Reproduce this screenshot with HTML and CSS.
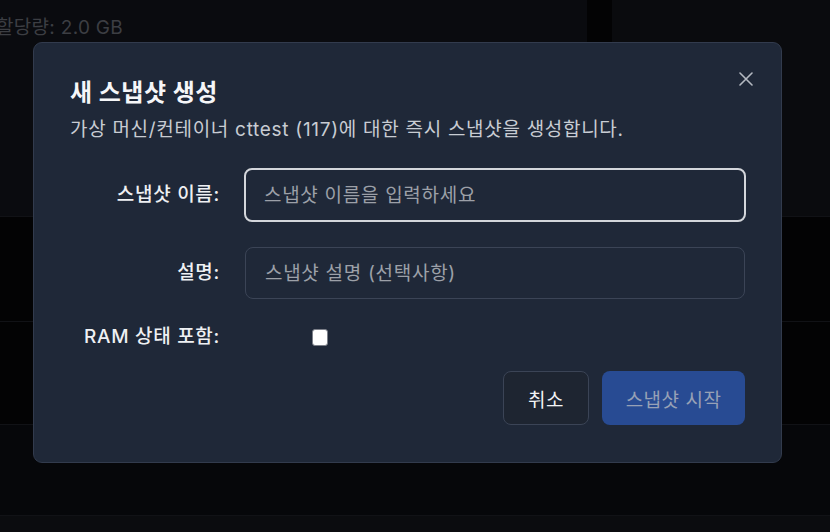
FILE: index.html
```html
<!DOCTYPE html>
<html lang="ko">
<head>
<meta charset="utf-8">
<title>새 스냅샷 생성</title>
<link rel="stylesheet" href="styles.css">
</head>
<body>
<div class="page">
  <div class="top">
    <div class="panel-left"><p class="quota">할당량: 2.0 GB</p></div>
    <div class="divider"></div>
    <div class="panel-right"></div>
  </div>
  <div class="rows">
    <div class="row row-a"></div>
    <div class="row row-b"></div>
    <div class="row row-c"></div>
    <div class="row row-d"></div>
  </div>
</div>

<div class="dialog" role="dialog">
  <button class="close" aria-label="닫기">
    <svg width="14" height="14" viewBox="0 0 14 14"><path d="M1 1L13 13M13 1L1 13" stroke="#b4b9c1" stroke-width="1.6" stroke-linecap="round"/></svg>
  </button>
  <h2 class="title">새 스냅샷 생성</h2>
  <p class="desc">가상 머신/컨테이너 cttest (117)에 대한 즉시 스냅샷을 생성합니다.</p>
  <div class="form">
    <label class="label">스냅샷 이름:</label>
    <input class="input focused" type="text" placeholder="스냅샷 이름을 입력하세요">
    <label class="label">설명:</label>
    <input class="input" type="text" placeholder="스냅샷 설명 (선택사항)">
    <label class="label label-check">RAM 상태 포함:</label>
    <div class="check-cell"><span class="checkbox"></span></div>
  </div>
  <div class="actions">
    <button class="btn btn-outline">취소</button>
    <button class="btn btn-primary">스냅샷 시작</button>
  </div>
</div>
</body>
</html>
```
FILE: styles.css
```css
* { box-sizing: border-box; }
html, body { margin: 0; padding: 0; }
body {
  width: 830px;
  height: 532px;
  overflow: hidden;
  background: #0a0b0f;
  font-family: Inter, "Noto Sans CJK KR", sans-serif;
}
.page { display: flex; flex-direction: column; height: 532px; }
.top { display: flex; height: 216px; }
.panel-left { width: 587px; background: #0a0b0f; }
.divider { width: 25px; background: #030304; }
.panel-right { flex: 1; background: #0a0b0e; }
.quota {
  margin: 15px 0 0 -4px;
  font-size: 19px;
  line-height: 26px;
  letter-spacing: 0.3px;
  color: #3c3e43;
  white-space: nowrap;
}
.rows { flex: 1; display: flex; flex-direction: column; }
.row { border-top: 1px solid #111216; }
.row-a { height: 105px; background: #030304; }
.row-b { height: 103px; background: #030304; }
.row-c { height: 91px; background: #06070a; }
.row-d { flex: 1; background: #0b0c0f; }

.dialog {
  position: fixed;
  left: 33px;
  top: 42px;
  width: 749px;
  height: 421px;
  background: #1f2838;
  border: 1px solid #323b4d;
  border-radius: 9px;
  padding: 35px 35px 0 36px;
  color: #f3f4f6;
}
.close {
  position: absolute;
  right: 28px;
  top: 29px;
  width: 14px;
  height: 14px;
  padding: 0;
  border: 0;
  background: none;
  display: flex;
}
.title {
  margin: 0;
  font-size: 24px;
  line-height: 30px;
  font-weight: 700;
  letter-spacing: 0.5px;
  color: #f5f6f8;
}
.desc {
  margin: 9px 0 0;
  font-size: 19px;
  line-height: 26px;
  letter-spacing: 0.7px;
  color: #c8ccd3;
}
.form {
  margin-top: 26px;
  display: grid;
  grid-template-columns: 150px 1fr;
  column-gap: 25px;
  row-gap: 26px;
  align-items: center;
}
.label {
  text-align: right;
  font-size: 19px;
  line-height: 24px;
  letter-spacing: 0.7px;
  font-weight: 500;
  color: #eef0f3;
  white-space: nowrap;
}
.input {
  width: 500px;
  height: 52px;
  border: 1px solid #3b4456;
  border-radius: 8px;
  background: transparent;
  padding: 0 19px;
  font-family: inherit;
  font-size: 19px;
  letter-spacing: 0.7px;
  color: #f3f4f6;
  outline: none;
}
.input::placeholder { color: #9ca0a8; }
.input.focused {
  border: 2px solid #d3d6db;
  padding: 0 18px;
  height: 54px;
  width: 502px;
  margin: -1px 0 -1px -1px;
}
.check-cell { width: 150px; display: flex; justify-content: center; }
.checkbox {
  width: 16px;
  height: 17px;
  background: #ffffff;
  border: 1px solid #7c8089;
  border-radius: 3px;
}
.actions {
  margin-top: 22px;
  display: flex;
  justify-content: flex-end;
  gap: 13px;
  padding-right: 1px;
}
.btn {
  height: 54px;
  border-radius: 8px;
  font-family: inherit;
  font-size: 19px;
  letter-spacing: 0.5px;
  padding: 0;
  white-space: nowrap;
}
.btn-outline {
  width: 86px;
  background: #1e2531;
  border: 1px solid #3b4456;
  color: #f3f4f6;
}
.btn-primary {
  width: 143px;
  background: #284b93;
  border: 0;
  color: #97a1b6;
}
```
